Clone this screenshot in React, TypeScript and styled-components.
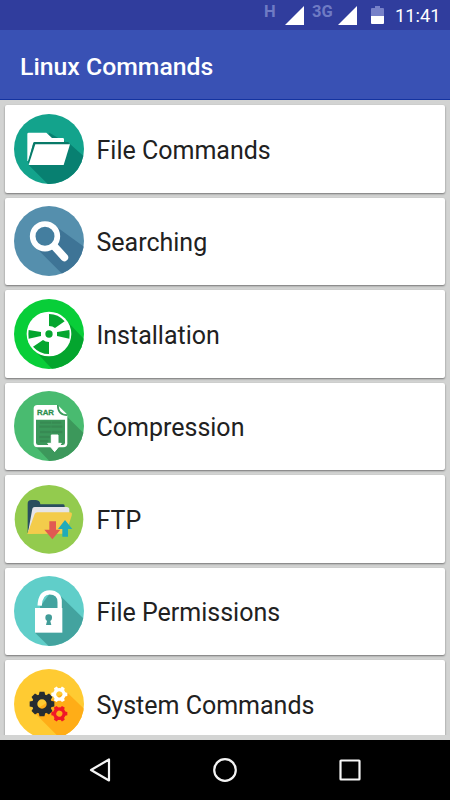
import React from "react";
import styled, { createGlobalStyle } from "styled-components";

const GlobalStyle = createGlobalStyle`
  html, body { margin: 0; padding: 0; }
  body { font-family: Roboto, "Liberation Sans", sans-serif; background: #000; }
  * { box-sizing: border-box; }
`;

const Screen = styled.div`
  width: 450px;
  height: 800px;
  display: flex;
  flex-direction: column;
  overflow: hidden;
  background: #d2d3d2;
`;

const StatusBar = styled.header`
  height: 30px;
  flex: none;
  display: flex;
  align-items: flex-start;
  justify-content: flex-end;
  padding-right: 10px;
  background: #303d9d;
`;

const Network = styled.span<{ $width: number }>`
  width: ${(p) => p.$width}px;
  padding-top: 2px;
  font-size: 16.5px;
  line-height: 19px;
  font-weight: 700;
  color: #6f7bc4;
`;

const Signal = styled.svg<{ $gap: number }>`
  width: 19px;
  height: 19px;
  margin-top: 6px;
  margin-right: ${(p) => p.$gap}px;
`;

const Battery = styled.svg`
  width: 13px;
  height: 19px;
  margin-top: 6px;
  margin-right: 11px;
`;

const Clock = styled.span`
  width: 45px;
  font-size: 18.3px;
  line-height: 32px;
  color: #fff;
  white-space: nowrap;
`;

const AppBar = styled.div`
  height: 70px;
  flex: none;
  display: flex;
  align-items: center;
  padding: 5px 20px 0;
  background: #3951b4;
  border-bottom: 1px solid #1433a0;
`;

const Title = styled.h1`
  margin: 0;
  font-size: 24.8px;
  line-height: 30px;
  font-weight: 500;
  color: #fff;
`;

const List = styled.main`
  height: 635px;
  flex: none;
  display: flex;
  flex-direction: column;
  gap: 5px;
  padding: 5px 5px 0;
  overflow: hidden;
`;

const Card = styled.article`
  height: 87.5px;
  flex: none;
  display: flex;
  align-items: center;
  gap: 12.5px;
  padding-left: 9px;
  background: #fff;
  border-radius: 2px;
  box-shadow: 0 1px 2px rgba(0, 0, 0, 0.45);
`;

const Icon = styled.svg`
  width: 70px;
  height: 70px;
  flex: none;
`;

const Label = styled.span`
  padding-top: 4px;
  font-size: 25px;
  line-height: 30px;
  color: #212121;
  white-space: nowrap;
`;

const ListFooter = styled.div`
  height: 5px;
  flex: none;
  background: #d3d4d3;
`;

const NavBar = styled.nav`
  height: 60px;
  flex: none;
  display: flex;
  align-items: center;
  justify-content: space-between;
  padding: 0 87px;
  background: #000;
`;

const NavIcon = styled.svg`
  width: 26px;
  height: 26px;
  fill: none;
  stroke: #f4f4f4;
  stroke-width: 2.2;
  stroke-linejoin: round;
`;

type DiscProps = {
  id: string;
  top: number;
  color: string;
  shade?: string;
  shadow?: string;
  children: React.ReactNode;
};

function Disc({ id, top, color, shade, shadow, children }: DiscProps) {
  return (
    <Icon viewBox={`42 ${top} 210 210`}>
      <clipPath id={id}>
        <circle cx="147" cy={top + 105} r="105" />
      </clipPath>
      <circle cx="147" cy={top + 105} r="105" fill={color} />
      {shadow && <path d={shadow} fill={shade} clipPath={`url(#${id})`} />}
      {children}
    </Icon>
  );
}

const FolderIcon = () => (
  <Disc id="folder" top={41} color="#13a38c" shade="#088071" shadow="M86 194 L146 254 H260 V176 L210 131 L190 122 L148 97 Z">
    <path d="M82 182 V101 Q82 97 86 97 H139 L156 113 H188 Q192 113 192 117 V125 H104 Q101 125 100 129 L84 182Z" fill="#fff" />
    <path d="M84 188 L99 130 Q100 125 104 125 H206 V134 H106 L88 188Z" fill="#087968" />
    <path d="M106 132 H210 L191 194 H86Z" fill="#fff" />
  </Disc>
);

const SearchIcon = () => (
  <Disc id="search" top={33} color="#558fad" shade="#3e7496" shadow="M103 153 L200 250 H265 V165 L167 94Z">
    <circle cx="135" cy="124" r="37" fill="#447e9f" stroke="#fff" strokeWidth="17" />
    <path d="M163 154 L193 187" stroke="#fff" strokeWidth="23" strokeLinecap="round" />
  </Disc>
);

const DiscIcon = () => (
  <Disc id="cd" top={32} color="#08ce38" shade="#04a52e" shadow="M98 180 L160 246 H260 V160 L198 96Z">
    <circle cx="147" cy="137" r="67" fill="#fff" />
    <g fill="#05a62f">
      <path d="M147 77 Q175 77 194 99 L165 119 Q158 113 147 113Z" />
      <path d="M147 197 Q119 197 99 175 L129 155 Q136 161 147 161Z" />
      <path d="M86 125 L123 131 V143 L86 151 Q84 138 86 125Z" />
      <path d="M208 125 L171 131 V143 L208 151 Q210 138 208 125Z" />
      <circle cx="147" cy="137" r="11" />
    </g>
  </Disc>
);

const RarIcon = () => (
  <Disc id="rar" top={33} color="#49bb70" shade="#3c985b" shadow="M103 196 L155 250 H260 V168 L199 108Z">
    <path d="M112 75 H172 L202 105 V190 Q202 202 190 202 H112 Q101 202 101 190 V86 Q101 75 112 75Z" fill="#fff" />
    <path d="M172 75 Q173 105 202 106 L202 103 L176 77Z" fill="#49bb70" />
    <path d="M176 78 L201 103 Q178 102 176 78Z" fill="#fff" />
    <path d="M173 75 Q173 106 202 106" fill="none" stroke="#3c985b" strokeWidth="4" />
    <path d="M108 119 H195 V188 Q195 195 188 195 H115 Q108 195 108 188Z" fill="#3c985b" />
    <path d="M120 128 H184 M118 140 H187 M120 156 H187 M118 171 H150 M120 183 H145" stroke="#378a53" strokeWidth="7" strokeDasharray="34 2" />
    <path d="M154 165 H174 V190 H184 L164 215 L143 190 H154Z" fill="#fff" stroke="#fff" strokeWidth="3" strokeLinejoin="round" />
    <text x="111" y="105" fontFamily="Liberation Sans, sans-serif" fontWeight="700" fontSize="22" textLength="51" lengthAdjust="spacingAndGlyphs" fill="#2f8f50" stroke="#2f8f50" strokeWidth="0.8">RAR</text>
  </Disc>
);

const FtpIcon = () => (
  <Icon viewBox="42 32 210 210">
    <circle cx="147" cy="138" r="103" fill="#93cb4e" />
    <path d="M83 180 V91 Q83 80 94 80 H108 Q120 81 121 93 H190 Q194 93 194 98 V125 H100Z" fill="#294e5e" />
    <path d="M84 178 L97 106 Q98 101 104 101 H200 Q208 101 208 109 V130 H110Z" fill="#e5e4e7" />
    <path d="M82 182 L104 122 Q106 117 112 117 H209 Q218 117 215 127 L197 181Z" fill="#f3cc4b" />
    <path d="M148 144 H168 V169 H181 L157 198 L133 169 H148Z" fill="#e15a52" />
    <path d="M187 190 V167 H174 L195 140 L217 167 H204 V190Z" fill="#20abba" />
  </Icon>
);

const LockIcon = () => (
  <Disc id="lock" top={33} color="#60cec9" shade="#43a39f" shadow="M105 203 L153 250 H260 V170 L181 92 L150 85 L121 124Z">
    <path d="M119 122 C120 96 131 82 149 82 C168 82 180 94 179 112 V132" fill="none" stroke="#fff" strokeWidth="13" />
    <path d="M105 129 H187 V203 H105Z" fill="#fff" />
    <circle cx="146" cy="158" r="10" fill="#419c98" />
    <path d="M143 160 H149 L154 180 H138Z" fill="#419c98" />
  </Disc>
);

type GearProps = { x: number; y: number; size: number; teeth: number; turn?: number; color: string };

function Gear({ x, y, size, teeth, turn = 0, color }: GearProps) {
  return (
    <g transform={`translate(${x} ${y}) rotate(${turn}) scale(${size})`}>
      <circle r="0.59" fill="none" stroke={color} strokeWidth="0.42" />
      {Array.from({ length: teeth }, (_, i) => (
        <path key={i} d="M-.27 -.7 L-.2 -1 H.2 L.27 -.7Z" fill={color} transform={`rotate(${(i * 360) / teeth})`} />
      ))}
    </g>
  );
}

const GearsIcon = () => (
  <Disc id="gears" top={41} color="#ffcb32" shade="#ffad17" shadow="M99 168 L185 254 H260 V168 L200 110 L160 130Z">
    <Gear x={126} y={146} size={37} teeth={8} color="#272d31" />
    <Gear x={178} y={117} size={24} teeth={6} turn={30} color="#fff" />
    <Gear x={178} y={175} size={24} teeth={6} turn={30} color="#f01827" />
  </Disc>
);

const commands = [
  { label: "File Commands", Glyph: FolderIcon },
  { label: "Searching", Glyph: SearchIcon },
  { label: "Installation", Glyph: DiscIcon },
  { label: "Compression", Glyph: RarIcon },
  { label: "FTP", Glyph: FtpIcon },
  { label: "File Permissions", Glyph: LockIcon },
  { label: "System Commands", Glyph: GearsIcon },
];

const SignalBars = ({ gap }: { gap: number }) => (
  <Signal $gap={gap} viewBox="0 0 19 19">
    <path d="M0 19 L19 0 V19Z" fill="#fff" />
  </Signal>
);

export default function App() {
  return (
    <Screen>
      <GlobalStyle />
      <StatusBar>
        <Network $width={21}>H</Network>
        <SignalBars gap={8} />
        <Network $width={26}>3G</Network>
        <SignalBars gap={14} />
        <Battery viewBox="0 0 13 19">
          <path d="M4 0 H9 V2 H12 Q13 2 13 3 V11 H0 V3 Q0 2 1 2 H4Z" fill="#7781c8" />
          <path d="M0 10 H13 V17 Q13 18 12 18 H1 Q0 18 0 17Z" fill="#fff" />
        </Battery>
        <Clock>11:41</Clock>
      </StatusBar>
      <AppBar>
        <Title>Linux Commands</Title>
      </AppBar>
      <List>
        {commands.map(({ label, Glyph }) => (
          <Card key={label}>
            <Glyph />
            <Label>{label}</Label>
          </Card>
        ))}
      </List>
      <ListFooter />
      <NavBar>
        <NavIcon viewBox="0 0 26 26">
          <path d="M4 13 L22 2.5 V23.5Z" />
        </NavIcon>
        <NavIcon viewBox="0 0 26 26">
          <circle cx="13" cy="13" r="10.8" />
        </NavIcon>
        <NavIcon viewBox="0 0 26 26">
          <rect x="3.5" y="3.5" width="19" height="19" rx="0.5" />
        </NavIcon>
      </NavBar>
    </Screen>
  );
}
